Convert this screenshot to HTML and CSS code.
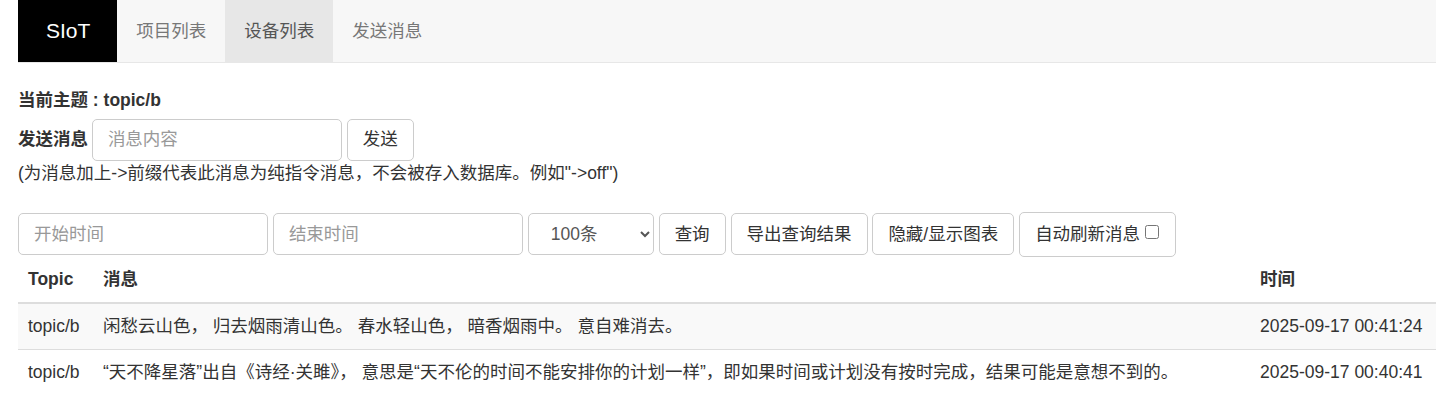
FILE: index.html
```html
<!DOCTYPE html>
<html lang="zh-CN">

<head>
    <link rel="stylesheet" href="styles.css">
    <meta charset="UTF-8">
    <meta name="viewport" content="width=device-width, initial-scale=1.0">
    <title>SIoT</title>
</head>

<body>
    <nav class="navbar">
        <a class="brand" href="#">SIoT</a>
        <a class="nav-item" href="#">项目列表</a>
        <a class="nav-item active" href="#">设备列表</a>
        <a class="nav-item" href="#">发送消息</a>
    </nav>

    <div class="page">
        <label class="topic-label">当前主题 : topic/b</label>

        <div class="send-row">
            <label class="send-label">发送消息</label>
            <input class="form-control msg-input" type="text" placeholder="消息内容">
            <button class="btn">发送</button>
        </div>
        <p class="hint">(为消息加上-&gt;前缀代表此消息为纯指令消息，不会被存入数据库。例如"-&gt;off")</p>

        <div class="filter-row">
            <input class="form-control time-input" type="text" placeholder="开始时间">
            <input class="form-control time-input" type="text" placeholder="结束时间">
            <select class="form-control count-select">
                <option>100条</option>
                <option>500条</option>
                <option>1000条</option>
            </select>
            <button class="btn">查询</button>
            <button class="btn">导出查询结果</button>
            <button class="btn">隐藏/显示图表</button>
            <label class="btn auto-refresh">自动刷新消息 <input type="checkbox"></label>
        </div>

        <table class="table">
            <thead>
                <tr>
                    <th class="col-topic">Topic</th>
                    <th>消息</th>
                    <th class="col-time">时间</th>
                </tr>
            </thead>
            <tbody>
                <tr>
                    <td>topic/b</td>
                    <td>闲愁云山色， 归去烟雨清山色。 春水轻山色， 暗香烟雨中。 意自难消去。</td>
                    <td>2025-09-17 00:41:24</td>
                </tr>
                <tr>
                    <td>topic/b</td>
                    <td>“天不降星落”出自《诗经·关雎》， 意思是“天不伦的时间不能安排你的计划一样”，即如果时间或计划没有按时完成，结果可能是意想不到的。</td>
                    <td>2025-09-17 00:40:41</td>
                </tr>
            </tbody>
        </table>
    </div>
</body>

</html>
```

FILE: styles.css
```css
body {
    margin: 0;
    padding-left: 18px;
    font-family: "Liberation Sans", "Noto Sans CJK SC", sans-serif;
    font-size: 17.5px;
    line-height: 1.42857;
    color: #333;
    overflow: hidden;
}

.navbar {
    display: flex;
    height: 62px;
    background-color: #f7f7f7;
    border-bottom: 1px solid #e7e7e7;
}

.brand {
    display: flex;
    align-items: center;
    padding: 0 27px 0 28px;
    background-color: #000;
    color: #fff;
    font-size: 21px;
    text-decoration: none;
}

.nav-item {
    display: flex;
    align-items: center;
    padding: 0 19px;
    color: #777;
    text-decoration: none;
}

.nav-item.active {
    background-color: #e7e7e7;
    color: #555;
}

.page {
    padding-top: 25px;
}

.topic-label {
    display: inline-block;
    font-weight: bold;
    margin-bottom: 6px;
}

.send-label {
    font-weight: bold;
}

.form-control {
    box-sizing: border-box;
    height: 42px;
    padding: 7px 15px;
    font-family: inherit;
    font-size: 17.5px;
    color: #555;
    background-color: #fff;
    border: 1px solid #ccc;
    border-radius: 5px;
    vertical-align: middle;
}

.form-control::placeholder {
    color: #999;
}

.msg-input {
    width: 250px;
    margin-left: -1px;
}

.time-input {
    width: 250px;
}

.count-select {
    width: 126px;
    padding-left: 18px;
}

.btn {
    display: inline-block;
    box-sizing: border-box;
    height: 42px;
    padding: 7px 15px;
    font-family: inherit;
    font-size: 17.5px;
    line-height: 1.42857;
    color: #333;
    background-color: #fff;
    border: 1px solid #ccc;
    border-radius: 5px;
    vertical-align: middle;
}

.hint {
    margin: 0;
}

.filter-row {
    margin-top: 26px;
}

.auto-refresh {
    height: 45px;
    padding-top: 9px;
    padding-right: 16px;
}

.auto-refresh input {
    width: 14px;
    height: 14px;
    margin: 0;
    vertical-align: 1px;
}

.table {
    width: 1418px;
    margin-top: 0;
    border-collapse: collapse;
}

.table th,
.table td {
    padding: 10px;
    text-align: left;
    vertical-align: top;
}

.table th {
    border-bottom: 2px solid #ddd;
}

.table td {
    border-top: 1px solid #ddd;
}

.table tbody tr:first-child td {
    border-top: 0;
}

.table tbody tr:nth-child(odd) {
    background-color: #f9f9f9;
}

.col-topic {
    width: 55px;
}

.col-time {
    width: 166px;
}
```
